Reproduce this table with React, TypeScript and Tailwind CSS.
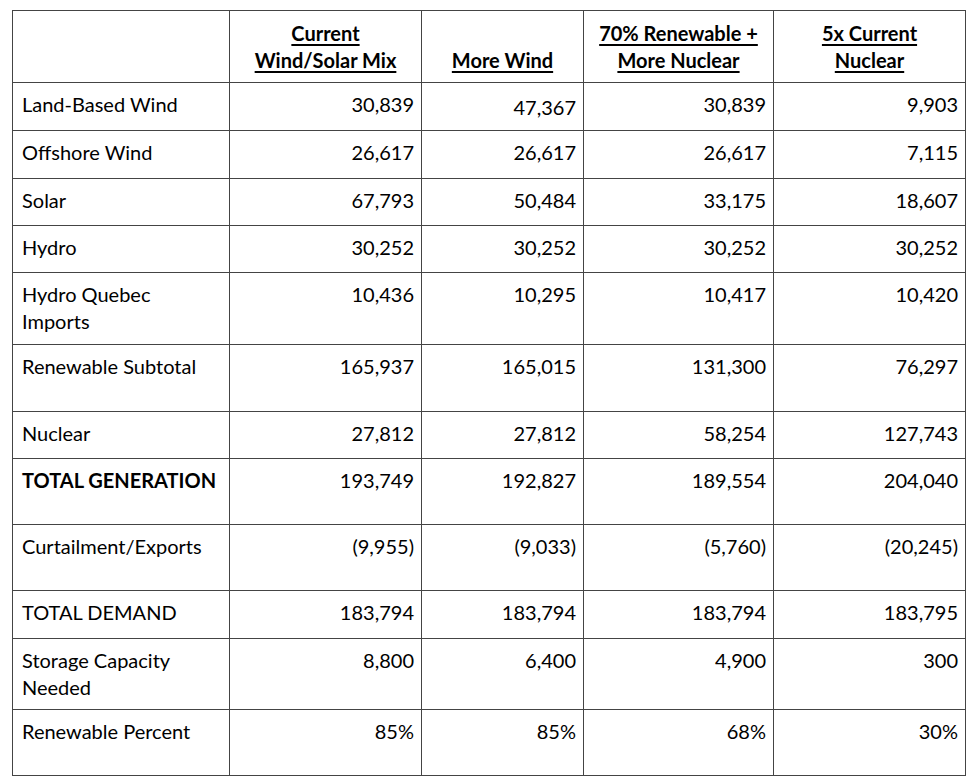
const headers = [
  ["Current", "Wind/Solar Mix"],
  ["More Wind"],
  ["70% Renewable +", "More Nuclear"],
  ["5x Current", "Nuclear"],
];

type Row = { label: string[]; values: string[]; h: string; bold?: boolean };

const rows: Row[] = [
  { label: ["Land-Based Wind"], values: ["30,839", "47,367", "30,839", "9,903"], h: "h-[48px]" },
  { label: ["Offshore Wind"], values: ["26,617", "26,617", "26,617", "7,115"], h: "h-[48px]" },
  { label: ["Solar"], values: ["67,793", "50,484", "33,175", "18,607"], h: "h-[47px]" },
  { label: ["Hydro"], values: ["30,252", "30,252", "30,252", "30,252"], h: "h-[47px]" },
  { label: ["Hydro Quebec", "Imports"], values: ["10,436", "10,295", "10,417", "10,420"], h: "h-[72px]" },
  { label: ["Renewable Subtotal"], values: ["165,937", "165,015", "131,300", "76,297"], h: "h-[67px]" },
  { label: ["Nuclear"], values: ["27,812", "27,812", "58,254", "127,743"], h: "h-[47px]" },
  { label: ["TOTAL GENERATION"], values: ["193,749", "192,827", "189,554", "204,040"], h: "h-[66px]", bold: true },
  { label: ["Curtailment/Exports"], values: ["(9,955)", "(9,033)", "(5,760)", "(20,245)"], h: "h-[66px]" },
  { label: ["TOTAL DEMAND"], values: ["183,794", "183,794", "183,794", "183,795"], h: "h-[48px]" },
  { label: ["Storage Capacity", "Needed"], values: ["8,800", "6,400", "4,900", "300"], h: "h-[71px]" },
  { label: ["Renewable Percent"], values: ["85%", "85%", "68%", "30%"], h: "h-[66px]" },
];

export default function App() {
  return (
    <div className="min-h-screen bg-white pt-[10px] pl-[12px] font-['Lato',sans-serif] text-[20px] leading-[27px] text-black">
      <table className="border-collapse table-fixed w-[953px]">
        <colgroup>
          <col className="w-[217px]" />
          <col className="w-[192px]" />
          <col className="w-[162px]" />
          <col className="w-[190px]" />
          <col className="w-[192px]" />
        </colgroup>
        <thead>
          <tr className="h-[72px]">
            <th className="border border-[#444]" />
            {headers.map((lines, i) => (
              <th key={i} className="border border-[#444] align-bottom px-2 pb-[8px] font-bold text-center">
                {lines.map((l) => (
                  <div key={l}>
                    <span className="underline decoration-2 underline-offset-[3px]">{l}</span>
                  </div>
                ))}
              </th>
            ))}
          </tr>
        </thead>
        <tbody>
          {rows.map((r) => (
            <tr key={r.label.join(" ")} className={r.h}>
              <td className={`border border-[#444] align-top pl-[9px] pt-[8px] ${r.bold ? "font-bold" : ""}`}>
                {r.label.map((l) => (
                  <div key={l}>{l}</div>
                ))}
              </td>
              {r.values.map((v, i) => (
                <td
                  key={i}
                  className={`border border-[#444] align-top text-right pr-[7px] ${
                    r.label[0] === "Land-Based Wind" && i === 1 ? "pt-[11px]" : "pt-[8px]"
                  }`}
                >
                  {v}
                </td>
              ))}
            </tr>
          ))}
        </tbody>
      </table>
    </div>
  );
}
